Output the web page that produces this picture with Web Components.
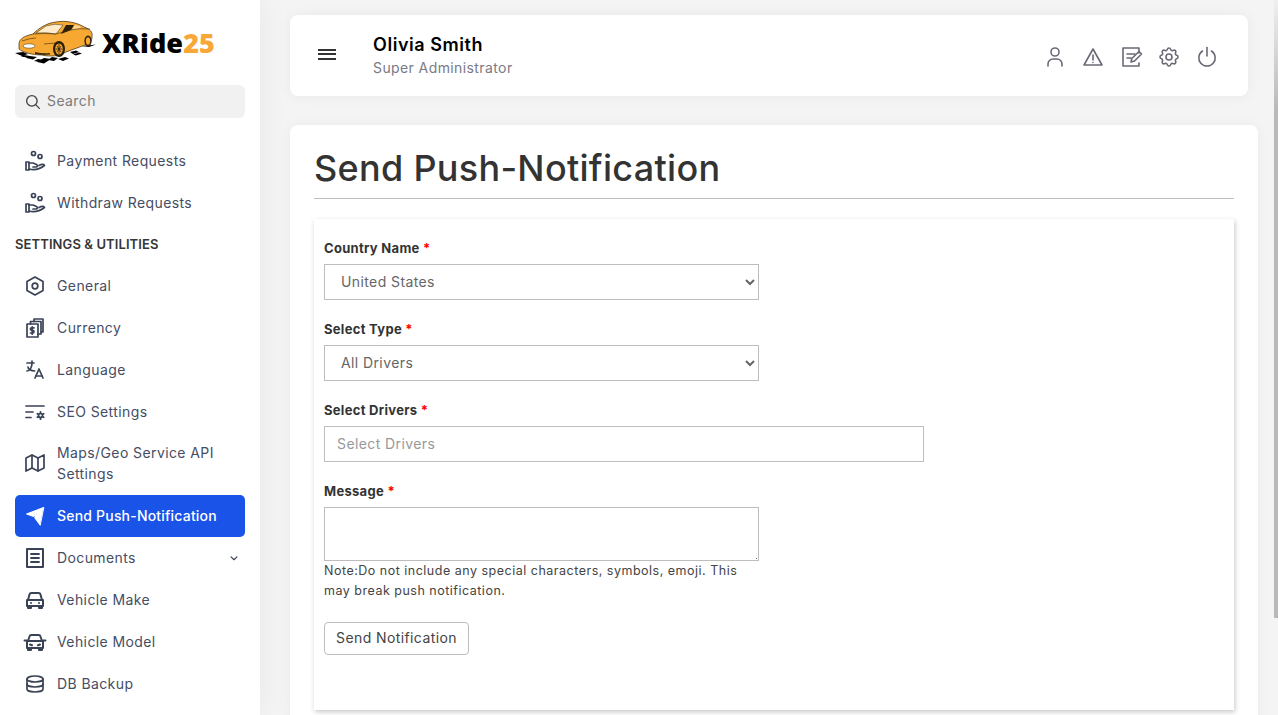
<!DOCTYPE html>
<html lang="en">
<head>
<meta charset="utf-8">
<title>Send Push-Notification</title>
<style>
    html, body { margin: 0; height: 100%; overflow: hidden; }
    body { font-family: Inter, "Liberation Sans", sans-serif; font-size: 14px; letter-spacing: .4px; background: #f4f4f4; }
</style>
</head>
<body>
<x-app>
    <x-sidebar slot="sidebar">
        <x-nav-item icon="payment">Payment Requests</x-nav-item>
        <x-nav-item icon="payment">Withdraw Requests</x-nav-item>
        <x-nav-title>SETTINGS &amp; UTILITIES</x-nav-title>
        <x-nav-item icon="general">General</x-nav-item>
        <x-nav-item icon="currency">Currency</x-nav-item>
        <x-nav-item icon="language">Language</x-nav-item>
        <x-nav-item icon="seo">SEO Settings</x-nav-item>
        <x-nav-item icon="map" style="margin-top: -1px">Maps/Geo Service API Settings</x-nav-item>
        <x-nav-item icon="send" active>Send Push-Notification</x-nav-item>
        <x-nav-item icon="documents" chevron>Documents</x-nav-item>
        <x-nav-item icon="car">Vehicle Make</x-nav-item>
        <x-nav-item icon="car2">Vehicle Model</x-nav-item>
        <x-nav-item icon="database">DB Backup</x-nav-item>
    </x-sidebar>
    <x-topbar name="Olivia Smith" role="Super Administrator"></x-topbar>
    <x-page-card title="Send Push-Notification">
        <x-push-form></x-push-form>
    </x-page-card>
</x-app>

<script>
(function () {
    const ICONS = {
        payment: '<circle cx="10.500" cy="4.500" r="2"/><circle cx="17" cy="7.500" r="2"/><path d="M3 13h3v8H3z"/><path d="M6 14h4l3.500 1.500c1.500 .700 1 2.500 -.500 2.500h-3"/><path d="M6 20c5 1.500 9.500 1 15.500 -3.500c-1 -1.500 -3 -1.300 -5.500 0"/>',
        general: '<path d="M12 3l8 4.500v9l-8 4.500l-8 -4.500v-9z"/><circle cx="12" cy="12" r="2.800"/>',
        currency: '<path d="M4 8h11v13H4z"/><path d="M7.500 8V5.500h10.500V18h-3"/><path d="M11 5.500V3h9v13h-2"/><path d="M11 11.800H8.700a1.100 1.100 0 0 0 0 2.600h1a1.100 1.100 0 0 1 0 2.600H7.500M9.200 10.800v7.400"/>',
        language: '<path d="M4 5h7"/><path d="M9 3v2c0 4.418 -2.239 8 -5 8"/><path d="M5 9c0 2.144 2.952 3.908 6.700 4"/><path d="M12 20l4 -9l4 9"/><path d="M19.100 18h-6.200"/>',
        seo: '<path d="M3 6h18M3 12h7M3 17.500h5"/><circle cx="17.500" cy="15.500" r="2"/><path d="M17.500 11.800v1.500M17.500 17.700v1.500M14.300 13.700l1.300 .700M19.400 16.600l1.300 .700M14.300 17.300l1.300 -.700M19.400 14.400l1.300 -.700"/>',
        map: '<path d="M3 7l6 -3l6 3l6 -3v13l-6 3l-6 -3l-6 3v-13"/><path d="M9 4v13"/><path d="M15 7v13"/>',
        send: '<path fill="currentColor" stroke-width="1" d="M20.500 3.500L3.500 10l7 2.500l3 -3l-2 4L17 21z"/>',
        documents: '<path stroke-width="2" d="M4 3h16v18H4z"/><path stroke-width="1.800" d="M8 8h8M8 12h8M8 16h8"/>',
        car: '<path stroke-width="2" d="M5 12l1.500 -5.500a2 2 0 0 1 2 -1.500h7a2 2 0 0 1 2 1.500L19 12"/><path stroke-width="2" d="M4 12h16v6H4zM5 18v2h3v-2M16 18v2h3v-2"/><path stroke-width="2" d="M8 15h.01M16 15h.01"/>',
        car2: '<path stroke-width="2" d="M5 11l1.500 -4.500a2 2 0 0 1 2 -1.500h7a2 2 0 0 1 2 1.500L19 11"/><path stroke-width="2" d="M4 11h16v7H4zM5 18v2h3v-2M16 18v2h3v-2"/><path stroke-width="2" d="M1.500 10.500H4M20 10.500h2.500M7 14.500l2 .800M17 14.500l-2 .800"/>',
        database: '<ellipse cx="12" cy="7" rx="8" ry="3"/><path d="M4 7v5a8 3 0 0 0 16 0v-5"/><path d="M4 12v5a8 3 0 0 0 16 0v-5"/>',
        search: '<circle cx="10.500" cy="10.500" r="7"/><path d="M20.500 20.500l-5 -5"/>',
        chevron: '<path d="M7 10l5 5l5 -5"/>',
        user: '<circle cx="12" cy="7" r="4"/><path d="M5 21v-2a5 5 0 0 1 5 -5h4a5 5 0 0 1 5 5v2"/>',
        warning: '<path d="M12 4l9 16H3z"/><path d="M12 10v5M12 17.500v.01"/>',
        note: '<path d="M20 8V3H4v18h16v-3"/><path d="M8 9h8M8 13h4"/><path d="M12 17l.800 -3.500L20 6.500l2.500 2.500l-7 7z"/>',
        gear: '<path d="M10.325 4.317c.426 -1.756 2.924 -1.756 3.350 0a1.724 1.724 0 0 0 2.573 1.066c1.543 -.940 3.310 .826 2.370 2.370a1.724 1.724 0 0 0 1.065 2.572c1.756 .426 1.756 2.924 0 3.350a1.724 1.724 0 0 0 -1.066 2.573c.940 1.543 -.826 3.310 -2.370 2.370a1.724 1.724 0 0 0 -2.572 1.065c-.426 1.756 -2.924 1.756 -3.350 0a1.724 1.724 0 0 0 -2.573 -1.066c-1.543 .940 -3.310 -.826 -2.370 -2.370a1.724 1.724 0 0 0 -1.065 -2.572c-1.756 -.426 -1.756 -2.924 0 -3.350a1.724 1.724 0 0 0 1.066 -2.573c-.940 -1.543 .826 -3.310 2.370 -2.370c1 .608 2.296 .070 2.572 -1.065z"/><circle cx="12" cy="12" r="3"/>',
        power: '<path d="M7.500 6a8.200 8.200 0 1 0 9 0"/><path d="M12 2.500v8.500"/>'
    };

    class XIcon extends HTMLElement {
        constructor() {
            super();
            this.attachShadow({ mode: 'open' });
        }
        connectedCallback() {
            const name = this.getAttribute('name');
            const size = this.getAttribute('size') || 24;
            const weight = this.getAttribute('weight') || 1.7;
            this.shadowRoot.innerHTML = `
            <style>
                :host { display: inline-flex; flex: none; }
                svg { display: block; }
            </style>
            <svg width="${size}" height="${size}" viewBox="0 0 24 24" fill="none" stroke="currentColor"
                 stroke-width="${weight}" stroke-linecap="round" stroke-linejoin="round">${ICONS[name] || ''}</svg>`;
        }
    }
    customElements.define('x-icon', XIcon);

    const $app = document.createElement('template');
    $app.innerHTML = `
    <style>
        :host { display: flex; height: 100vh; position: relative; overflow: hidden; }
        main {
            flex: 1;
            min-width: 0;
            display: flex;
            flex-direction: column;
            gap: 29px;
            padding: 15px 20px 0 30px;
            background: #f4f4f4;
        }
        .thumb {
            position: absolute;
            top: 0;
            right: 0;
            width: 4px;
            height: 618px;
            background: linear-gradient(to bottom, #f0f0f0, #b9b9b9 110px);
        }
    </style>
    <slot name="sidebar"></slot>
    <main><slot></slot></main>
    <div class="thumb"></div>
    `;

    class XApp extends HTMLElement {
        constructor() {
            super();
            this.attachShadow({ mode: 'open' });
            this.shadowRoot.appendChild($app.content.cloneNode(true));
        }
    }
    customElements.define('x-app', XApp);

    const $logo = document.createElement('template');
    $logo.innerHTML = `
    <style>
        :host { display: flex; align-items: center; gap: 5px; height: 46px; }
        svg { display: block; flex: none; }
        .name {
            font: 800 27px "Open Sans", "Liberation Sans", sans-serif;
            letter-spacing: .1px;
            color: #000;
        }
        .name b { font-weight: 800; color: #f8a838; }
    </style>
    <svg width="82" height="46" viewBox="15 20 82 46">
        <g fill="#000">
            <path d="M15 54l8 -1l5 2l-6 2zM24 56l6 1l-3 1.500l-6 -1zM30 57l7 1l-4 2.500l-7 -1.500zM38 60l6 1l-4 2l-6 -1zM44 59l7 1l-7 4.500l-7 -1.500zM52 58l6 1l-4 3l-6 -1zM58 60l7 -2l4 1.500l-6 2.500zM70 53l6 -1.500l3 1.500l-6 2zM73 55.500l6 -2l3 1l-6 2zM81 47l7 -.500l8 -1l-7 2.500z"/>
        </g>
        <path fill="#f6a832" stroke="#3b2a0e" stroke-width=".7" d="M19 45c0 -5 5 -8 14 -10c5 -5 13 -11 23 -12c10 -2 22 1 28 5c6 2 9 5 8 10c0 4 -2 7 -7 8l-19 7c-6 4 -16 5 -24 3c-10 0 -20 -3 -23 -6z"/>
        <path fill="#fdeccb" stroke="#3b2a0e" stroke-width=".5" d="M36 34l10 -7q9 -3 17 -1l-7 9q-10 -2 -20 -1z"/>
        <path fill="#2a1e08" d="M66 26l-5 9l10 -4l3 -5z"/>
        <path fill="#fbd592" d="M75 26l-3 5l9 -2l-1 -2z"/>
        <path fill="none" stroke="#3b2a0e" stroke-width=".6" d="M33 35q12 -1 23 0l14 -4q10 -2 20 -1M22 42q8 -3 14 -3M44 45l12 -1"/>
        <ellipse cx="29" cy="47" rx="6" ry="2.200" fill="#fff" stroke="#3b2a0e" stroke-width=".5"/>
        <path fill="#3b2a0e" d="M35 53q8 2 15 1v1.500q-8 1 -15 -.500z"/>
        <ellipse cx="59" cy="50" rx="6" ry="8" fill="#2a1e08"/>
        <ellipse cx="59" cy="50" rx="3.800" ry="5.600" fill="#f6a832"/>
        <path stroke="#2a1e08" stroke-width=".8" d="M59 45v10M55.500 50h7M57 47l4 6M61 47l-4 6"/>
        <ellipse cx="88" cy="42" rx="3.600" ry="5.400" fill="#2a1e08"/>
        <ellipse cx="88" cy="42" rx="2.200" ry="3.700" fill="#f6a832"/>
    </svg>
    <span class="name">XRide<b>25</b></span>
    `;

    class XLogo extends HTMLElement {
        constructor() {
            super();
            this.attachShadow({ mode: 'open' });
            this.shadowRoot.appendChild($logo.content.cloneNode(true));
        }
    }
    customElements.define('x-logo', XLogo);

    const $search = document.createElement('template');
    $search.innerHTML = `
    <style>
        :host {
            display: flex;
            align-items: center;
            gap: 5px;
            height: 33px;
            padding: 0 9px;
            background: #f1f1f1;
            border-radius: 6px;
            color: #444;
        }
        span { color: #7b7b7b; margin-bottom: 2px; }
    </style>
    <x-icon name="search" size="18" weight="1.800"></x-icon>
    <span>Search</span>
    `;

    class XSearch extends HTMLElement {
        constructor() {
            super();
            this.attachShadow({ mode: 'open' });
            this.shadowRoot.appendChild($search.content.cloneNode(true));
        }
    }
    customElements.define('x-search', XSearch);

    const $sidebar = document.createElement('template');
    $sidebar.innerHTML = `
    <style>
        :host {
            display: flex;
            flex-direction: column;
            flex: none;
            box-sizing: border-box;
            width: 260px;
            height: 100%;
            padding: 19px 15px 0;
            overflow: hidden;
            background: #fff;
            box-shadow: 0 0 30px rgba(0, 0, 0, .06);
            position: relative;
            z-index: 1;
        }
        x-search { margin: 20px 0 22px; }
    </style>
    <x-logo></x-logo>
    <x-search></x-search>
    <slot></slot>
    `;

    class XSidebar extends HTMLElement {
        constructor() {
            super();
            this.attachShadow({ mode: 'open' });
            this.shadowRoot.appendChild($sidebar.content.cloneNode(true));
        }
    }
    customElements.define('x-sidebar', XSidebar);

    const $navItem = document.createElement('template');
    $navItem.innerHTML = `
    <style>
        :host {
            display: flex;
            align-items: center;
            flex: none;
            gap: 10px;
            padding: 10px 10px 11px;
            line-height: 21px;
            color: #454d63;
            border-radius: 5px;
        }
        :host([active]) {
            background: #1a53e8;
            color: #fff;
            font-weight: 500;
            letter-spacing: .2px;
        }
        .label { flex: 1; }
        x-icon { color: #3a4256; }
        .main { margin: -2px 0 -2px -2px; }
        :host([active]) x-icon { color: #fff; }
        .chevron { display: none; margin-right: -6px; }
        :host([chevron]) .chevron { display: inline-flex; }
    </style>
    <x-icon class="main"></x-icon>
    <span class="label"><slot></slot></span>
    <x-icon class="chevron" name="chevron" size="14" weight="2"></x-icon>
    `;

    class XNavItem extends HTMLElement {
        constructor() {
            super();
            this.attachShadow({ mode: 'open' });
            const $content = $navItem.content.cloneNode(true);
            // the icon reads its name when it connects, so set it before the append
            $content.querySelector('.main').setAttribute('name', this.getAttribute('icon'));
            this.shadowRoot.appendChild($content);
        }
    }
    customElements.define('x-nav-item', XNavItem);

    const $navTitle = document.createElement('template');
    $navTitle.innerHTML = `
    <style>
        :host {
            display: block;
            flex: none;
            height: 41px;
            line-height: 41px;
            font-size: 13px;
            letter-spacing: .1px;
            font-weight: 600;
            color: #363636;
        }
    </style>
    <slot></slot>
    `;

    class XNavTitle extends HTMLElement {
        constructor() {
            super();
            this.attachShadow({ mode: 'open' });
            this.shadowRoot.appendChild($navTitle.content.cloneNode(true));
        }
    }
    customElements.define('x-nav-title', XNavTitle);

    const $topbar = document.createElement('template');
    $topbar.innerHTML = `
    <style>
        :host {
            display: flex;
            align-items: center;
            flex: none;
            box-sizing: border-box;
            height: 81px;
            margin-right: 10px;
            padding: 0 29px 0 28px;
            background: #fff;
            border-radius: 8px;
            box-shadow: 0 0 14px rgba(0, 0, 0, .05);
        }
        .burger { display: flex; flex-direction: column; gap: 2.500px; width: 18px; margin-top: -3px; }
        .burger i { height: 2px; background: #333; }
        .who { margin-left: 37px; flex: 1; margin-top: -2px; }
        .name { font-size: 18px; line-height: 26px; font-weight: 600; letter-spacing: .55px; color: #000; }
        .role { margin-top: -1px; line-height: 21px; color: #7a7a85; }
        .actions { display: flex; gap: 14px; color: #6a6a76; margin-top: 3px; }
    </style>
    <div class="burger"><i></i><i></i><i></i></div>
    <div class="who">
        <div class="name"></div>
        <div class="role"></div>
    </div>
    <div class="actions">
        <x-icon name="user" weight="1.600"></x-icon>
        <x-icon name="warning" weight="1.600"></x-icon>
        <x-icon name="note" weight="1.600"></x-icon>
        <x-icon name="gear" weight="1.600"></x-icon>
        <x-icon name="power" weight="1.600"></x-icon>
    </div>
    `;

    class XTopbar extends HTMLElement {
        constructor() {
            super();
            this.attachShadow({ mode: 'open' });
            this.shadowRoot.appendChild($topbar.content.cloneNode(true));
            this.shadowRoot.querySelector('.name').textContent = this.getAttribute('name');
            this.shadowRoot.querySelector('.role').textContent = this.getAttribute('role');
        }
    }
    customElements.define('x-topbar', XTopbar);

    const $card = document.createElement('template');
    $card.innerHTML = `
    <style>
        :host {
            display: block;
            flex: none;
            box-sizing: border-box;
            height: 720px;
            padding: 19px 24px 0;
            background: #fff;
            border-radius: 8px 8px 0 0;
            box-shadow: 0 0 14px rgba(0, 0, 0, .04);
        }
        h1 {
            margin: 0 0 20px;
            padding-bottom: 5px;
            font-size: 36px;
            line-height: 49px;
            font-weight: 500;
            letter-spacing: .3px;
            color: #333;
            border-bottom: 1px solid #bdbdbd;
        }
    </style>
    <h1></h1>
    <slot></slot>
    `;

    class XPageCard extends HTMLElement {
        constructor() {
            super();
            this.attachShadow({ mode: 'open' });
            this.shadowRoot.appendChild($card.content.cloneNode(true));
            this.shadowRoot.querySelector('h1').textContent = this.getAttribute('title');
        }
    }
    customElements.define('x-page-card', XPageCard);

    const $field = document.createElement('template');
    $field.innerHTML = `
    <style>
        :host { display: block; margin-bottom: 19px; }
        label {
            display: block;
            margin-bottom: 5px;
            font-size: 13px;
            line-height: 21px;
            font-weight: 700;
            letter-spacing: .3px;
            color: #333;
        }
        label i { font-style: normal; color: #f00; }
    </style>
    <label><span></span> <i>*</i></label>
    <slot></slot>
    `;

    class XField extends HTMLElement {
        constructor() {
            super();
            this.attachShadow({ mode: 'open' });
            this.shadowRoot.appendChild($field.content.cloneNode(true));
            this.shadowRoot.querySelector('span').textContent = this.getAttribute('label');
        }
    }
    customElements.define('x-field', XField);

    const $form = document.createElement('template');
    $form.innerHTML = `
    <style>
        :host {
            display: block;
            box-sizing: border-box;
            height: 491px;
            padding: 19px 10px 0;
            background: #fff;
            box-shadow: 1px 2px 5px rgba(0, 0, 0, .22);
        }
        select, input, textarea, button {
            box-sizing: border-box;
            display: block;
            font: inherit;
            letter-spacing: inherit;
            border: 1px solid #bdbdbd;
            background: #fff;
            color: #666;
            outline: none;
        }
        select { width: 435px; height: 36px; padding: 0 12px 2px; border-radius: 0; }
        input { width: 600px; height: 36px; padding: 0 12px 2px; }
        input::placeholder { color: #999; opacity: 1; }
        textarea { width: 435px; height: 54px; resize: vertical; }
        textarea::-webkit-resizer {
            background: linear-gradient(#666, #666) no-repeat calc(100% - 1px) calc(100% - 1px) / 1px 1px;
        }
        .note {
            margin: 0 0 21px;
            font-size: 12.500px;
            line-height: 20px;
            letter-spacing: .5px;
            color: #444;
            white-space: nowrap;
        }
        x-field.last { margin-bottom: 0; }
        button {
            width: 145px;
            height: 33px;
            padding: 0 0 2px;
            color: #444;
            border-radius: 4px;
        }
    </style>
    <x-field label="Country Name">
        <select><option>United States</option></select>
    </x-field>
    <x-field label="Select Type">
        <select><option>All Drivers</option></select>
    </x-field>
    <x-field label="Select Drivers">
        <input type="text" placeholder="Select Drivers">
    </x-field>
    <x-field class="last" label="Message">
        <textarea></textarea>
    </x-field>
    <div class="note">Note:Do not include any special characters, symbols, emoji. This<br>may break push notification.</div>
    <button type="button">Send Notification</button>
    `;

    class XPushForm extends HTMLElement {
        constructor() {
            super();
            this.attachShadow({ mode: 'open' });
            this.shadowRoot.appendChild($form.content.cloneNode(true));
        }
    }
    customElements.define('x-push-form', XPushForm);
})();
</script>
</body>
</html>
